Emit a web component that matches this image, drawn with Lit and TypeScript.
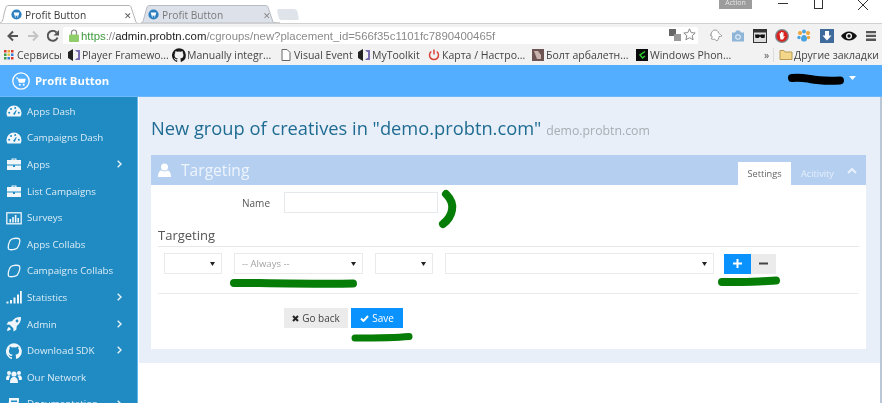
import { LitElement, html, css, svg } from "lit";
import { customElement } from "lit/decorators.js";

const ICONS: Record<string, any> = {
  gauge: svg`<path fill="#f1f6fa" d="M8 2.500a7.500 7.500 0 0 0-7.500 7.500c0 1.300.3 2.500.9 3.500h13.200c.6-1 .9-2.200.9-3.500A7.500 7.500 0 0 0 8 2.500z"/><g fill="#1f8bc2"><circle cx="3.200" cy="9.800" r="1"/><circle cx="5" cy="6" r="1"/><circle cx="9.200" cy="5" r="1"/><circle cx="12.800" cy="9.800" r="1"/><path d="M7 11l3-4 .7.500L8.800 12z"/></g>`,
  case: svg`<path fill="#f1f6fa" d="M5.500 4V2.500h5V4H15v4.500H1V4zM6.700 4h2.600v-.5H6.700zM1 9.500h6V11h2V9.500h6V14H1z"/>`,
  chart: svg`<rect x=".8" y="2.800" width="14.400" height="11" fill="none" stroke="#eef5fa" stroke-width="1.300"/><path fill="#f1f6fa" d="M3.500 9h1.600v3.500H3.500zM6.200 7h1.600v5.500H6.200zM8.800 5h1.600v7.500H8.800zM11.400 8h1.600v4.500h-1.600z"/>`,
  blob: svg`<path fill="none" stroke="#eef5fa" stroke-width="1.300" d="M5 3.500C7.500 2 12.500 1.800 13.500 3.200c1 1.600-.3 6.500-2.500 9-1.800 1.600-6.600 2-8.200 1-1.200-1.200-.5-7.200 2.200-9.700z"/>`,
  signal: svg`<path fill="#f1f6fa" d="M.5 12.500h2v2h-2zM4 11h2v3.500H4zM7.500 8.500h2v6h-2zM11 5.500h2v9h-2zM14 2h1.800v12.500H14z"/>`,
  rocket: svg`<path fill="#f1f6fa" d="M15 1c-4-.2-7 1.300-9 4.200L2.300 5.700.5 8.500l3.200.2 3.600 3.600.2 3.200 2.800-1.800.5-3.700C13.700 8 15.200 5 15 1zM11 6.400a1.400 1.400 0 1 1 0-2.800 1.400 1.400 0 0 1 0 2.800zM3 11c-1.200.5-1.800 2.300-2 4 1.700-.2 3.500-.8 4-2z"/>`,
  github: svg`<path transform="scale(.667)" fill="#f1f6fa" d="M12 .5a12 12 0 0 0-3.800 23.400c.6.100.8-.3.800-.6v-2.100c-3.300.7-4-1.600-4-1.600-.6-1.400-1.400-1.800-1.400-1.800-1.100-.7.100-.7.100-.7 1.200.1 1.900 1.200 1.900 1.200 1.100 1.800 2.800 1.300 3.500 1 .1-.8.400-1.300.8-1.600-2.700-.3-5.500-1.300-5.500-5.900 0-1.300.5-2.400 1.200-3.200-.1-.3-.5-1.500.1-3.200 0 0 1-.3 3.300 1.200a11.500 11.500 0 0 1 6 0c2.300-1.500 3.300-1.200 3.300-1.200.7 1.700.2 2.900.1 3.200.8.800 1.200 1.900 1.200 3.200 0 4.600-2.800 5.600-5.500 5.900.4.400.8 1.100.8 2.200v3.300c0 .3.200.7.800.6A12 12 0 0 0 12 .5z"/>`,
  users: svg`<g fill="#f1f6fa"><circle cx="8" cy="5" r="2.600"/><circle cx="3" cy="4" r="2"/><circle cx="13" cy="4" r="2"/><path d="M4 14c0-3.500 1-6 4-6s4 2.500 4 6zM0 10c0-2.500 1-3.700 3-3.700.7 0 1 .3 1.300.7C3.500 8 3 9 3 11H.5zM16 10c0-2.500-1-3.700-3-3.700-.7 0-1 .3-1.300.7.800 1 1.300 2 1.300 4h2.500z"/></g>`,
  book: svg`<path fill="#f1f6fa" d="M3 2h10v3l-2 9H1l2-9z"/><path fill="#1f8bc2" d="M5 4.500h6V6H5z"/>`,
};

const NAV = [
  ["gauge", "Apps Dash", false], ["gauge", "Campaigns Dash", false], ["case", "Apps", true],
  ["case", "List Campaigns", false], ["chart", "Surveys", false], ["blob", "Apps Collabs", false],
  ["blob", "Campaigns Collabs", false], ["signal", "Statistics", true], ["rocket", "Admin", true],
  ["github", "Download SDK", true], ["users", "Our Network", false], ["book", "Documentation", true],
] as [string, string, boolean][];

const FAV = svg`<circle cx="7" cy="7" r="6.500" fill="#2b7fc0"/><path fill="#fff" d="M3.500 4.500h7l-1 4h-5z"/><circle cx="5.500" cy="10" r=".8" fill="#fff"/><circle cx="8.500" cy="10" r=".8" fill="#fff"/>`;
const PLAYER = svg`<path fill="#222" d="M1 4l5-3v12l-5-3z"/><path fill="#7b6bb0" d="M8 2h5v10H8l2-2h1V4h-1z"/>`;
const GH = svg`<path transform="scale(.583)" fill="#1a1a1a" d="M12 .5a12 12 0 0 0-3.800 23.400c.6.100.8-.3.800-.6v-2.100c-3.300.7-4-1.600-4-1.600-.6-1.400-1.400-1.800-1.400-1.800-1.100-.7.100-.7.100-.7 1.200.1 1.900 1.200 1.900 1.200 1.100 1.800 2.800 1.300 3.500 1 .1-.8.400-1.300.8-1.600-2.700-.3-5.500-1.300-5.500-5.900 0-1.300.5-2.400 1.200-3.200-.1-.3-.5-1.500.1-3.200 0 0 1-.3 3.300 1.200a11.500 11.500 0 0 1 6 0c2.300-1.500 3.300-1.200 3.300-1.200.7 1.700.2 2.900.1 3.200.8.800 1.200 1.900 1.200 3.200 0 4.600-2.800 5.600-5.500 5.900.4.400.8 1.100.8 2.200v3.300c0 .3.200.7.800.6A12 12 0 0 0 12 .5z"/>`;

const BOOKMARKS: [any, string, number][] = [
  [svg`<rect x="2" y="2" width="2.500" height="2.500" fill="#d93a2b"/><rect x="5.500" y="2" width="2.500" height="2.500" fill="#e8a53a"/><rect x="9" y="2" width="2.500" height="2.500" fill="#d93a2b"/><rect x="2" y="5.500" width="2.500" height="2.500" fill="#3a9b4b"/><rect x="5.500" y="5.500" width="2.500" height="2.500" fill="#e8c53a"/><rect x="9" y="5.500" width="2.500" height="2.500" fill="#3a7bd9"/><rect x="2" y="9" width="2.500" height="2.500" fill="#3a9b4b"/><rect x="5.500" y="9" width="2.500" height="2.500" fill="#3a7bd9"/><rect x="9" y="9" width="2.500" height="2.500" fill="#d93a2b"/>`, "Сервисы", 65],
  [PLAYER, "Player Framewo...", 105],
  [GH, "Manually integr...", 107],
  [svg`<path fill="#fff" stroke="#666" d="M3 1.500h5l3 3v8H3z"/>`, "Visual Event", 78],
  [PLAYER, "MyToolkit", 70],
  [svg`<path fill="none" stroke="#d9443a" stroke-width="1.500" d="M4.300 3.500a4.500 4.500 0 1 0 5.400 0M7 1.500v5"/>`, "Карта / Настро...", 104],
  [svg`<rect x="1" y="1" width="12" height="12" fill="#6e5554"/><path fill="#c9b3ad" d="M3 3h4l3 4v4H6z"/>`, "Болт арбалетн...", 104],
  [svg`<rect x="1" y="1" width="12" height="12" fill="#0a0a0a"/><path fill="none" stroke="#2ecc30" stroke-width="1.500" d="M10 3.500L5 7l2.500 3L10 8"/>`, "Windows Phon...", 129],
];

const TOOLS: [any, number][] = [
  [svg`<path fill="#fff" stroke="#9b9b9b" d="M4 7c0-3 2-5 4-5s3 1 3.500 3c1 1 2.500 1.500 3.500 3-1 .5-2 .5-3 .5 0 1.500-1 3.500-2 4.500-1-.5-2-1-2.500-2-1 .5-2 .5-3 0 .5-1 .5-2 .5-3-1 0-1.500-.5-2-1z"/>`, 23],
  [svg`<path fill="#8fb5d8" d="M2 4.500h3L6.500 2.500h3L11 4.500h3v9H2z"/><circle cx="8" cy="9" r="2.800" fill="#e8f0f8"/><circle cx="8" cy="9" r="1.800" fill="#8fb5d8"/>`, 23],
  [svg`<rect x="1.500" y="1.500" width="13" height="13" fill="#ddd" stroke="#333"/><rect x="1.500" y="1.500" width="13" height="3" fill="#333"/><path fill="#111" d="M3 6.500h4.500l.5 1 .5-1H13l-.5 3.500h-3L8 8.500 6.500 10h-3z"/>`, 22],
  [svg`<circle cx="8" cy="8" r="7" fill="#7d8a8f"/><circle cx="8" cy="8" r="5.700" fill="#d8231f"/><path fill="#fff" d="M5.500 5.500l1-.5.5 1V4h1v2l.5-2 1 .5V9l.7-1 .6.500-1.800 3H6.500z"/>`, 22],
  [svg`<g fill="#f0a63a"><circle cx="4" cy="5" r="2"/><circle cx="3" cy="9.500" r="1.700" fill="#4aa3df"/></g><circle cx="8" cy="3.500" r="2" fill="#4aa3df"/><circle cx="12" cy="5" r="2" fill="#f0a63a"/><circle cx="12.500" cy="9.500" r="1.700" fill="#f0a63a"/><path fill="#4aa3df" d="M8 7c2 0 3 2 3 4 0 2-1.500 2.500-3 2.500S5 13 5 11c0-2 1-4 3-4z"/>`, 22],
  [svg`<rect x="1" y="1" width="14" height="14" fill="#3f6b9c"/><path fill="#fff" d="M6 3h4v4.500h2.500L8 12.500 3.500 7.500H6z"/>`, 23],
  [svg`<path fill="#111" d="M0 8c2-3 5-4.500 8-4.500S14 5 16 8c-2 3-5 4.500-8 4.500S2 11 0 8z"/><circle cx="8" cy="8" r="3" fill="#fff"/><circle cx="8" cy="8" r="1.700" fill="#111"/>`, 22],
  [svg`<path fill="#555" d="M3 3h10v2.300H3zM3 6.800h10v2.300H3zM3 10.600h10v2.300H3z"/>`, 22],
];

@customElement("app-root")
export class AppRoot extends LitElement {
  static styles = css`
    :host {
      display: block; width: 882px; height: 403px; overflow: hidden; position: relative;
      background: #fff; font-family: "Open Sans", sans-serif; filter: blur(0.5px);
    }
    .tabs { height: 23px; display: flex; position: relative; background: #fff; }
    .tab { position: relative; width: 139px; height: 23px; display: flex; align-items: center; flex: none;
      padding: 6px 0 0 11px; box-sizing: border-box; font: 10.200px "Open Sans", sans-serif; color: #3a3a3a; }
    .tab.off { color: #7a7a7a; width: 138px; padding-left: 7px; margin-left: 2px; }
    .tab svg.shape { position: absolute; left: 0; top: 0; }
    .tab .fav { position: relative; width: 11px; height: 11px; margin-right: 3px; flex: none; }
    .tab span { position: relative; flex: 1; }
    .tab .x { position: absolute; right: 7px; top: 9px; font-size: 9px; color: #555; flex: none; }
    .tab.off .x { color: #888; right: 8px; }
    .newtab { width: 20px; height: 11px; margin: 9px 0 0 -1px; background: #dfe3ea; border-radius: 2px 3px 2px 2px; transform: skewX(12deg); flex: none; }
    .win { position: absolute; left: 719px; top: 0; right: 0; height: 12px; }
    .acct { position: absolute; left: 0; top: 0; width: 33px; height: 9px; background: #9c9c9c; color: #e6e6e6; font-size: 7px; line-height: 5px; text-align: center; overflow: hidden; }
    .min { position: absolute; left: 59px; top: 3px; width: 10px; height: 1px; background: #333; }
    .max { position: absolute; left: 95px; top: -2px; width: 7px; height: 9px; border: 1px solid #333; }
    .cls { position: absolute; left: 138px; top: 0; }

    .toolbar { height: 21px; background: #f2f2f2; border-top: 1px solid #d0d0d0; box-sizing: border-box; display: flex; align-items: center; padding-left: 3px; }
    .nav-ic { width: 20px; height: 18px; flex: none; display: flex; align-items: center; justify-content: center; margin-top: 3px; }
    .address { width: 635px; height: 17px; margin-top: 3px; background: #fff; box-sizing: border-box; display: flex; align-items: center; padding-left: 6px; flex: none; position: relative; font: 11.400px "Liberation Sans", sans-serif; color: #8a8a8a; white-space: nowrap; border-radius: 2px 2px 0 0; }
    .address svg.lock { margin-right: 2px; flex: none; }
    .g { color: #3f9b3f; } .d { color: #222; }
    .address .right { position: absolute; right: 2px; top: 1px; display: flex; gap: 2px; align-items: center; }
    .tools { display: flex; margin-left: 5px; align-items: center; margin-top: 3px; }
    .tools .t { display: flex; justify-content: center; flex: none; }

    .bookmarks { height: 21px; background: #f2f2f2; display: flex; align-items: center; padding-left: 2px; font: 10.500px "Open Sans", sans-serif; color: #444; white-space: nowrap; }
    .bm { display: flex; align-items: center; gap: 1px; flex: none; }
    .bm svg { flex: none; }
    .more { width: 9px; flex: none; color: #555; }
    .sep { width: 1px; height: 14px; background: #ddd; margin: 0 5px 0 0; flex: none; }
    .folder { display: flex; align-items: center; gap: 1px; flex: none; }

    .head { height: 32px; background: #53aeff; display: flex; align-items: center; padding-left: 12px; color: #fff; font-size: 11.300px; font-weight: 700; border-bottom: 1px solid #6db9fb; box-sizing: border-box; }
    .head .logo { width: 18px; height: 18px; margin-right: 5px; flex: none; }
    .head .caret { margin-left: auto; margin-right: 26px; margin-bottom: 5px; flex: none; }

    .body { display: flex; height: 306px; }
    .side { width: 137px; background: #1f8bc2; border-right: 1px solid #63b7ec; flex: none; padding-top: 1px; overflow: hidden; }
    .row { height: 26.600px; display: flex; align-items: center; padding-left: 6px; color: #dcecf6; font-size: 9.800px; position: relative; white-space: nowrap; }
    .row svg.ic { margin-right: 5px; flex: none; }
    .row svg.ch { position: absolute; left: 117px; top: 9px; }
    .gapper { width: 1px; flex: none; }

    .wrap { flex: 1; display: flex; align-items: flex-start; border-right: 2px solid #b9c6d6; }
    .main { flex: 1; height: 266px; background: #e8eff9; padding: 17px 14px 0 12px; box-sizing: border-box; }
    h1 { margin: 0; height: 27px; line-height: 27px; font-weight: 400; font-size: 18.300px; color: #1f6c92; white-space: nowrap; }
    h1 small { font-size: 12.300px; color: #a9adb2; }
    .panel { margin-top: 14px; background: #fff; height: 194px; }
    .phead { height: 30px; background: #b5cff0; display: flex; align-items: center; padding-left: 7px; color: #eef4fc; font-size: 15.600px; box-sizing: border-box; }
    .phead .uic { margin-right: 10px; flex: none; }
    .ptabs { margin-left: auto; align-self: flex-end; display: flex; height: 23px; font-size: 9.200px; align-items: center; }
    .ptab { width: 53px; height: 23px; display: flex; align-items: center; justify-content: center; flex: none; }
    .ptab.on { background: #fff; color: #666; }
    .ptab.off { width: 53px; color: #e6effa; }
    .chev { margin: 0 9px 6px 3px; flex: none; }
    .pbody { padding: 7px 7px 0; font-size: 10px; color: #555; }
    .namerow { display: flex; align-items: center; gap: 14px; }
    .namerow label { width: 112px; text-align: right; font-size: 10px; }
    .input { width: 154px; height: 21px; border: 1px solid #e6e9ec; box-sizing: border-box; background: #fff; }
    h2 { margin: 13px 0 0; height: 20px; font-size: 13px; line-height: 18px; font-weight: 400; color: #555; border-bottom: 1px solid #e8e8e8; }
    .selects { display: flex; gap: 12px; padding: 6px 0 19px 6px; border-bottom: 1px solid #ececec; align-items: center; }
    .sel { height: 21px; border: 1px solid #eaeaea; box-sizing: border-box; background: #fff; display: flex; align-items: center; justify-content: space-between; padding: 0 6px 0 7px; flex: none; color: #a3a3a3; font-size: 9.500px; }
    .sel svg { margin-left: auto; }
    .w1 { width: 58px; } .w2 { width: 129px; } .w3 { width: 269px; }
    .btnpair { display: flex; margin-left: -2px; }
    .b { height: 20px; display: flex; align-items: center; justify-content: center; font-size: 10px; box-sizing: border-box; flex: none; }
    .blue { background: #0a93ff; color: #fff; }
    .grey { background: #ebebeb; color: #444; }
    .actions { display: flex; gap: 3px; padding: 14px 0 0 126px; }
    .marks { position: absolute; left: 0; top: 0; pointer-events: none; }
  `;

  render() {
    const arrow = html`<svg width="5" height="4" viewBox="0 0 5 4"><path fill="#222" d="M0 0h5L2.500 4z"/></svg>`;
    return html`
      <div class="tabs">
        <div class="tab">
          <svg class="shape" width="143" height="23" viewBox="0 0 143 23"><path fill="#fff" stroke="#b5b5b5" d="M0 23c3-1 3-4 4-9l2-7c.5-1 1-1.500 3-1.500h119c2 0 2.500.5 3 1.500l5 15c.5 1 1 1.500 5 1.500"/></svg>
          <svg class="fav" viewBox="0 0 14 14">${FAV}</svg><span>Profit Button</span><span class="x">✕</span>
        </div>
        <div class="tab off">
          <svg class="shape" width="140" height="23" viewBox="0 0 140 23"><path fill="#dde2ea" stroke="#b8bcc2" d="M0 23c2-.5 2-2 3-5l3-11c.5-1 1-1.500 3-1.500h115c2 0 2.500.5 3 1.500l5 15c.5.500 2 1 7 1z"/></svg>
          <svg class="fav" viewBox="0 0 14 14">${FAV}</svg><span>Profit Button</span><span class="x">✕</span>
        </div>
        <div class="newtab"></div>
        <div class="win">
          <div class="acct">Action</div><div class="min"></div><div class="max"></div>
          <svg class="cls" width="12" height="10" viewBox="0 0 12 10"><path stroke="#333" fill="none" d="M1 0l10 10M11 0L1 10"/></svg>
        </div>
      </div>
      <div class="toolbar">
        <span class="nav-ic"><svg width="12" height="12" viewBox="0 0 12 12"><path fill="none" stroke="#555" stroke-width="2" d="M11 6H2M6 1.500L1.500 6 6 10.500"/></svg></span>
        <span class="nav-ic"><svg width="12" height="12" viewBox="0 0 12 12"><path fill="none" stroke="#c4c4c4" stroke-width="2" d="M1 6h9M6 1.500L10.500 6 6 10.500"/></svg></span>
        <span class="nav-ic"><svg width="12" height="12" viewBox="0 0 12 12"><path fill="none" stroke="#555" stroke-width="2" d="M10.500 7.500A5 5 0 1 1 9.500 2.500"/><path fill="#555" d="M12 0v5.500H6.500z"/></svg></span>
        <div class="address">
          <svg class="lock" width="10" height="13" viewBox="0 0 10 13"><path fill="none" stroke="#8a8a8a" stroke-width="1.200" d="M2.500 6V3.500a2.500 2.500 0 0 1 5 0V6"/><rect x="0" y="5.500" width="10" height="7.500" rx="1" fill="#8fce6b"/></svg>
          <span class="g">https</span>://<span class="d">admin.probtn.com</span>/cgroups/new?placement_id=566f35c1101fc7890400465f
          <div class="right">
            <svg width="12" height="12" viewBox="0 0 12 12"><rect x="0" y="0" width="7" height="7" fill="#666"/><rect x="5" y="5" width="7" height="7" fill="#999"/></svg>
            <svg width="13" height="13" viewBox="0 0 13 13"><path fill="#fff" stroke="#888" d="M6.500 .8l1.700 3.800 4 .4-3 2.700.9 4.100-3.600-2.100-3.600 2.100.9-4.100-3-2.700 4-.4z"/></svg>
          </div>
        </div>
        <div class="tools">
          ${TOOLS.map(([i, w]) => html`<span class="t" style="width:${w}px"><svg width="16" height="16" viewBox="0 0 16 16">${i}</svg></span>`)}
        </div>
      </div>
      <div class="bookmarks">
        ${BOOKMARKS.map(([i, t, w]) => html`<div class="bm" style="width:${w}px"><svg width="14" height="14" viewBox="0 0 14 14">${i}</svg><span>${t}</span></div>`)}
        <span class="more">»</span><span class="sep"></span>
        <div class="folder"><svg width="14" height="13" viewBox="0 0 14 13"><path fill="#f3d68a" stroke="#b89a55" d="M1 2.500h4l1 1.500h7v7.500H1z"/></svg><span>Другие закладки</span></div>
      </div>
      <div class="head">
        <svg class="logo" viewBox="0 0 18 18"><circle cx="9" cy="9" r="8.200" fill="none" stroke="#fff" stroke-width="1.300"/><path fill="#fff" d="M4 5.500h2l.4 1.200h7.400l-1.200 4H7L5.400 6.500H4z"/><circle cx="7.800" cy="12.700" r="1" fill="#fff"/><circle cx="11.700" cy="12.700" r="1" fill="#fff"/></svg>
        <span>Profit Button</span>
        <svg class="caret" width="7" height="4" viewBox="0 0 7 4"><path fill="#fff" d="M0 0h7L3.500 4z"/></svg>
      </div>
      <div class="body">
        <nav class="side">
          ${NAV.map(([ic, t, ch]) => html`<div class="row">
            <svg class="ic" width="16" height="16" viewBox="0 0 16 16">${ICONS[ic]}</svg><span>${t}</span>
            ${ch ? html`<svg class="ch" width="5" height="8" viewBox="0 0 5 8"><path fill="none" stroke="#e8f2f8" stroke-width="1.400" d="M.7.700L4 4 .7 7.300"/></svg>` : ""}
          </div>`)}
        </nav>
        <div class="gapper"></div>
        <div class="wrap">
          <main class="main">
            <h1>New group of creatives in "demo.probtn.com" <small>demo.probtn.com</small></h1>
            <section class="panel">
              <div class="phead">
                <svg class="uic" width="13" height="14" viewBox="0 0 13 14"><circle cx="6.500" cy="4" r="3.500" fill="#fff"/><path fill="#fff" d="M0 14c0-5 2-6.500 3.500-6.500 1.800 1.200 4.200 1.200 6 0C11 7.500 13 9 13 14z"/></svg>
                <span>Targeting</span>
                <div class="ptabs">
                  <div class="ptab on">Settings</div>
                  <div class="ptab off">Acitivity</div>
                  <svg class="chev" width="10" height="6" viewBox="0 0 10 6"><path fill="none" stroke="#eaf2fb" stroke-width="2" d="M1 5l4-4 4 4"/></svg>
                </div>
              </div>
              <div class="pbody">
                <div class="namerow"><label>Name</label><div class="input"></div></div>
                <h2>Targeting</h2>
                <div class="selects">
                  <div class="sel w1">${arrow}</div>
                  <div class="sel w2"><span>-- Always --</span>${arrow}</div>
                  <div class="sel w1">${arrow}</div>
                  <div class="sel w3">${arrow}</div>
                  <div class="btnpair">
                    <div class="b blue" style="width:27px"><svg width="9" height="9" viewBox="0 0 9 9"><path fill="#fff" d="M3.500 0h2v3.500H9v2H5.500V9h-2V5.500H0v-2h3.500z"/></svg></div>
                    <div class="b grey" style="width:25px"><svg width="9" height="9" viewBox="0 0 9 9"><path fill="#444" d="M0 3.500h9v2H0z"/></svg></div>
                  </div>
                </div>
                <div class="actions">
                  <div class="b grey" style="width:64px;gap:3px"><svg width="7" height="7" viewBox="0 0 7 7"><path stroke="#222" stroke-width="2" d="M1 1l5 5M6 1L1 6"/></svg>Go back</div>
                  <div class="b blue" style="width:52px;gap:3px"><svg width="9" height="7" viewBox="0 0 9 7"><path fill="none" stroke="#fff" stroke-width="2" d="M1 3.500l2.500 2.500L8 1"/></svg>Save</div>
                </div>
              </div>
            </section>
          </main>
        </div>
      </div>
      <svg class="marks" width="882" height="403" viewBox="0 0 882 403">
        <path fill="none" stroke="#000" stroke-width="8" stroke-linecap="round" d="M792 78c8-1 12 0 18 1 10 2 20 2 30 1.500"/>
        <g fill="none" stroke="#067d06" stroke-linecap="round">
          <path stroke-width="8" d="M446 194c5 5 7 11 6 16-1 6-5 11-9 14"/>
          <path stroke-width="8" d="M234 283h25c30 .5 70 1 94 .5"/>
          <path stroke-width="8" d="M722 282h20c12 0 24-1 34-1.500"/>
          <path stroke-width="7" d="M355 338c15 0 38 0 54-1.500"/>
        </g>
      </svg>
    `;
  }
}
